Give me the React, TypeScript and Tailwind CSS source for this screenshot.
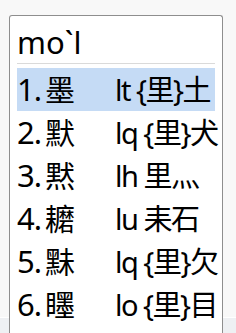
import React from 'react';

const candidates = [
  { n: '1.', ch: '墨', code: 'lt {里}土' },
  { n: '2.', ch: '默', code: 'lq {里}犬' },
  { n: '3.', ch: '黙', code: 'lh 里灬' },
  { n: '4.', ch: '耱', code: 'lu 耒石' },
  { n: '5.', ch: '䵢', code: 'lq {里}欠' },
  { n: '6.', ch: '䁼', code: 'lo {里}目' },
];

export default function App() {
  return (
    <div
      className="w-[236px] h-[333px] overflow-hidden flex flex-col bg-[linear-gradient(to_bottom,#f8f8f8_0,#f8f8f8_317px,#ffffff_317px,#ffffff_318px,#eef0f3_318px)] text-black"
      style={{ fontFamily: '"Noto Sans", "Noto Sans CJK SC", sans-serif' }}
    >
      <div className="ml-[9px] mt-[15px] w-[214px] flex-1 bg-white border border-b-0 border-[#8e8e8e] rounded-t-[3px] px-[7px]">
        {/* composition */}
        <div className="h-[47px] pt-[6px] text-[31px] leading-[40px] whitespace-pre">{'mo`l'}</div>
        <div className="h-px bg-[#dadada]" />

        {/* candidate list */}
        <div className="mt-[4px] flex flex-col">
          {candidates.map((c, i) => (
            <div
              key={c.n}
              className={
                'h-[43px] grid grid-cols-[28px_70px_1fr] items-center text-[29px] leading-[43px] whitespace-nowrap ' +
                (i === 0 ? 'bg-[#c5dbf5]' : '')
              }
            >
              <span className="text-[31px] tracking-[-1px]">{c.n}</span>
              <span className="text-[30px]">{c.ch}</span>
              <span className="tracking-[-1.5px]">{c.code}</span>
            </div>
          ))}
        </div>
      </div>
    </div>
  );
}
